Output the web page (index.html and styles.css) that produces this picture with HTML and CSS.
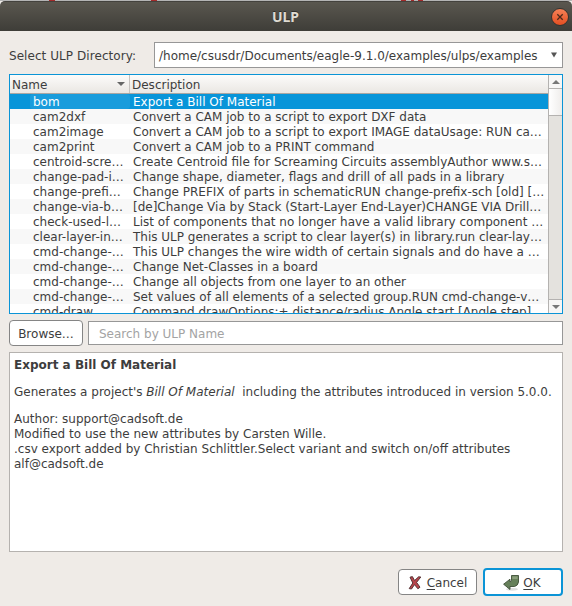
FILE: index.html
```html
<!DOCTYPE html>
<html lang="en">
<head>
<meta charset="utf-8">
<title>ULP</title>
<link rel="stylesheet" href="styles.css">
</head>
<body>
<div class="window">
  <div class="backdrop"><i></i><i></i><i></i><i></i><i></i></div>
  <header class="titlebar">
    <h1>ULP</h1>
    <button class="close" aria-label="Close"><svg width="18" height="18" viewBox="0 0 18 18"><path d="M6.3 6.3l5.4 5.4M11.7 6.3l-5.4 5.4" stroke="#4b2a1c" stroke-width="1.3"/></svg></button>
  </header>
  <main class="content">
    <div class="directory">
      <label>Select ULP Directory:</label>
      <div class="combo"><span>/home/csusdr/Documents/eagle-9.1.0/examples/ulps/examples</span><svg width="6" height="6" viewBox="0 0 6 6"><path d="M0 .5h6L3 5.5z" fill="#555"/></svg></div>
    </div>
    <div class="list">
      <div class="table">
        <div class="head"><div class="name"><span>Name</span><svg width="8" height="4" viewBox="0 0 8 4"><path d="M0 0h8L4 4z" fill="#666"/></svg></div><div class="desc">Description</div></div>
        <div class="row selected"><span class="name">bom</span><span class="desc">Export a Bill Of Material</span></div>
        <div class="row"><span class="name">cam2dxf</span><span class="desc">Convert a CAM job to a script to export DXF data</span></div>
        <div class="row"><span class="name">cam2image</span><span class="desc">Convert a CAM job to a script to export IMAGE dataUsage: RUN ca…</span></div>
        <div class="row"><span class="name">cam2print</span><span class="desc">Convert a CAM job to a PRINT command</span></div>
        <div class="row"><span class="name">centroid-scre…</span><span class="desc">Create Centroid file for Screaming Circuits assemblyAuthor www.s…</span></div>
        <div class="row"><span class="name">change-pad-i…</span><span class="desc">Change shape, diameter, flags and drill of all pads in a library</span></div>
        <div class="row"><span class="name">change-prefi…</span><span class="desc">Change PREFIX of parts in schematicRUN change-prefix-sch [old] […</span></div>
        <div class="row"><span class="name">change-via-b…</span><span class="desc">[de]Change Via by Stack (Start-Layer End-Layer)CHANGE VIA Drill…</span></div>
        <div class="row"><span class="name">check-used-l…</span><span class="desc">List of components that no longer have a valid library component …</span></div>
        <div class="row"><span class="name">clear-layer-in…</span><span class="desc">This ULP generates a script to clear layer(s) in library.run clear-lay…</span></div>
        <div class="row"><span class="name">cmd-change-…</span><span class="desc">This ULP changes the wire width of certain signals and do have a …</span></div>
        <div class="row"><span class="name">cmd-change-…</span><span class="desc">Change Net-Classes in a board</span></div>
        <div class="row"><span class="name">cmd-change-…</span><span class="desc">Change all objects from one layer to an other</span></div>
        <div class="row"><span class="name">cmd-change-…</span><span class="desc">Set values of all elements of a selected group.RUN cmd-change-v…</span></div>
        <div class="row"><span class="name">cmd-draw</span><span class="desc">Command drawOptions:+ distance/radius Angle start [Angle step]</span></div>
      </div>
      <div class="scrollbar">
        <div class="arrow"><svg width="8" height="4" viewBox="0 0 8 4"><path d="M0 4h8L4 0z" fill="#777"/></svg></div>
        <div class="thumb"></div>
        <div class="track"></div>
        <div class="arrow down"><svg width="8" height="4" viewBox="0 0 8 4"><path d="M0 0h8L4 4z" fill="#777"/></svg></div>
      </div>
    </div>
    <div class="search">
      <button class="btn browse">Browse…</button>
      <input type="text" placeholder="Search by ULP Name">
    </div>
    <section class="details">
      <p><b>Export a Bill Of Material</b></p>
      <p>Generates a project's <i>Bill Of Material</i>&nbsp; including the attributes introduced in version 5.0.0.</p>
      <p>Author: support@cadsoft.de<br>Modified to use the new attributes by Carsten Wille.<br>.csv export added by Christian Schlittler.Select variant and switch on/off attributes<br>alf@cadsoft.de</p>
    </section>
    <footer class="actions">
      <button class="btn cancel"><svg width="14" height="16" viewBox="0 0 14 16"><path d="M2 2.2L4.4 1.6l2.2 3.9L10.6 1.8l2.2.2-4.2 5.4 3.4 4.8-2.1 1.6-3.4-4.2-3 4.4-2.3-.4L4.8 8z" fill="#b8454c" stroke="#4c2b2d" stroke-width=".9"/></svg><span><u>C</u>ancel</span></button>
      <button class="btn ok"><svg width="16" height="16" viewBox="0 0 16 16"><ellipse cx="9" cy="14.3" rx="6" ry="1.4" fill="#dedede"/><path d="M8.5 .5h7v6.5q-.5 3.7-4 4.5H7v3L.6 9.2 7 4.2v2.6q1.5 0 1.5-1.6z" fill="#66805a" stroke="#3f4f38" stroke-width=".9"/><path d="M9.3 1.4h5.3v2.6H9.3z" fill="#8b9f7c"/></svg><span><u>O</u>K</span></button>
    </footer>
  </main>
</div>
</body>
</html>
```
FILE: styles.css
```css
* { box-sizing: border-box; }
body {
  margin: 0;
  font: 12px/15px "DejaVu Sans", sans-serif;
  color: #3d3d3d;
  background: #efebe7;
}
svg { display: block; flex: none; }
button, input { font: inherit; color: inherit; }
.window { width: 572px; height: 606px; display: flex; flex-direction: column; overflow: hidden; }
.backdrop { height: 1px; background: #b4b4b4; display: flex; flex: none; }
.backdrop i { height: 1px; width: 6px; background: #a52a2a; margin-left: 49px; }
.backdrop i:nth-child(2) { margin-left: 96px; }
.backdrop i:nth-child(3) { margin-left: 244px; width: 5px; }
.backdrop i:nth-child(4) { margin-left: 5px; width: 3px; }
.backdrop i:nth-child(5) { margin-left: 4px; width: 5px; }
.titlebar {
  height: 30px;
  flex: none;
  display: grid;
  grid-template-columns: 1fr auto 1fr;
  align-items: center;
  padding-right: 3px;
  background: linear-gradient(#5a574f, #3e3d38);
  border-top: 1px solid #44423d;
  border-radius: 5px 5px 0 0;
}
.titlebar h1 { grid-column: 2; margin: 0; padding-left: 2px; font: bold 14px/18px "Noto Sans", sans-serif; color: #dfdbd2; text-shadow: 0 -1px #2e2d2a; }
.close {
  justify-self: end;
  width: 18px;
  height: 18px;
  padding: 0;
  border: 1px solid #34332f;
  border-radius: 50%;
  background: linear-gradient(#f68157, #e44f22);
  display: flex;
  align-items: center;
  justify-content: center;
}
.content { flex: 1; padding: 11px 9px 10px; display: flex; flex-direction: column; }
.directory { display: flex; height: 26px; align-items: center; justify-content: space-between; }
.directory label { padding-top: 2px; letter-spacing: 0.06px; }
.combo {
  width: 409px;
  height: 26px;
  padding: 0 5px 0 4px;
  border: 1px solid #979797;
  background: #fff;
  display: flex;
  align-items: center;
  justify-content: space-between;
}
.combo span { padding-top: 2px; }
.list { margin-top: 6px; height: 240px; border: 1px solid #0b94d6; display: flex; background: #fff; }
.table { flex: 1; overflow: hidden; white-space: nowrap; }
.head {
  height: 19px;
  display: flex;
  line-height: 20px;
  background: linear-gradient(#fcfbfa, #eae7e3);
  border-bottom: 1px solid #a8a6a3;
}
.head .name {
  width: 120px;
  padding: 0 4px 0 2px;
  border-right: 1px solid #c6c3c0;
  display: flex;
  align-items: center;
  justify-content: space-between;
}
.head .name span { align-self: flex-start; }
.head .desc { padding-left: 2px; }
.row { height: 15px; display: flex; line-height: 17px; }
.row:nth-child(odd) { background: #f8f8f8; }
.row .name { width: 100px; margin-left: 20px; padding-left: 3px; }
.row .desc { padding-left: 3px; }
.row.selected { background: #0895d9; color: #fff; }
.row.selected .name { background: #199cdc; border-radius: 3px; height: 15px; }
.scrollbar { width: 14px; border-left: 1px solid #b4b2b0; display: flex; flex-direction: column; background: #e4e2de; }
.arrow { height: 14px; background: #f7f6f5; border-bottom: 1px solid #b4b2b0; display: flex; align-items: center; justify-content: center; }
.arrow.down { border-bottom: 0; border-top: 1px solid #b4b2b0; }
.thumb { height: 27px; border-bottom: 1px solid #b4b2b0; background: linear-gradient(90deg, #fff, #efedeb); }
.track { flex: 1; }
.search { margin-top: 6px; height: 26px; display: flex; align-items: center; gap: 5px; }
.search input {
  width: 475px;
  height: 24px;
  padding: 2px 10px 0;
  border: 1px solid #979797;
  background: #fff;
}
.search input::placeholder { color: #a3a3a3; opacity: 1; }
.btn {
  height: 26px;
  padding: 2px 0 0;
  border: 1px solid #858585;
  border-radius: 4px;
  background: #fff;
  display: flex;
  align-items: center;
  justify-content: center;
}
.browse { width: 74px; }
.details { margin-top: 6px; height: 200px; padding: 5px 4px; border: 1px solid #b5b2af; background: #fff; white-space: nowrap; }
.details p { margin: 0 0 12px; }
.actions { margin-top: 16px; display: flex; align-items: center; justify-content: flex-end; gap: 6px; }
.btn u { text-underline-offset: 2px; }
.cancel { width: 79px; gap: 5px; }
.ok { width: 80px; height: 28px; border: 2px solid #0b94d6; gap: 4px; padding-right: 2px; }
```
